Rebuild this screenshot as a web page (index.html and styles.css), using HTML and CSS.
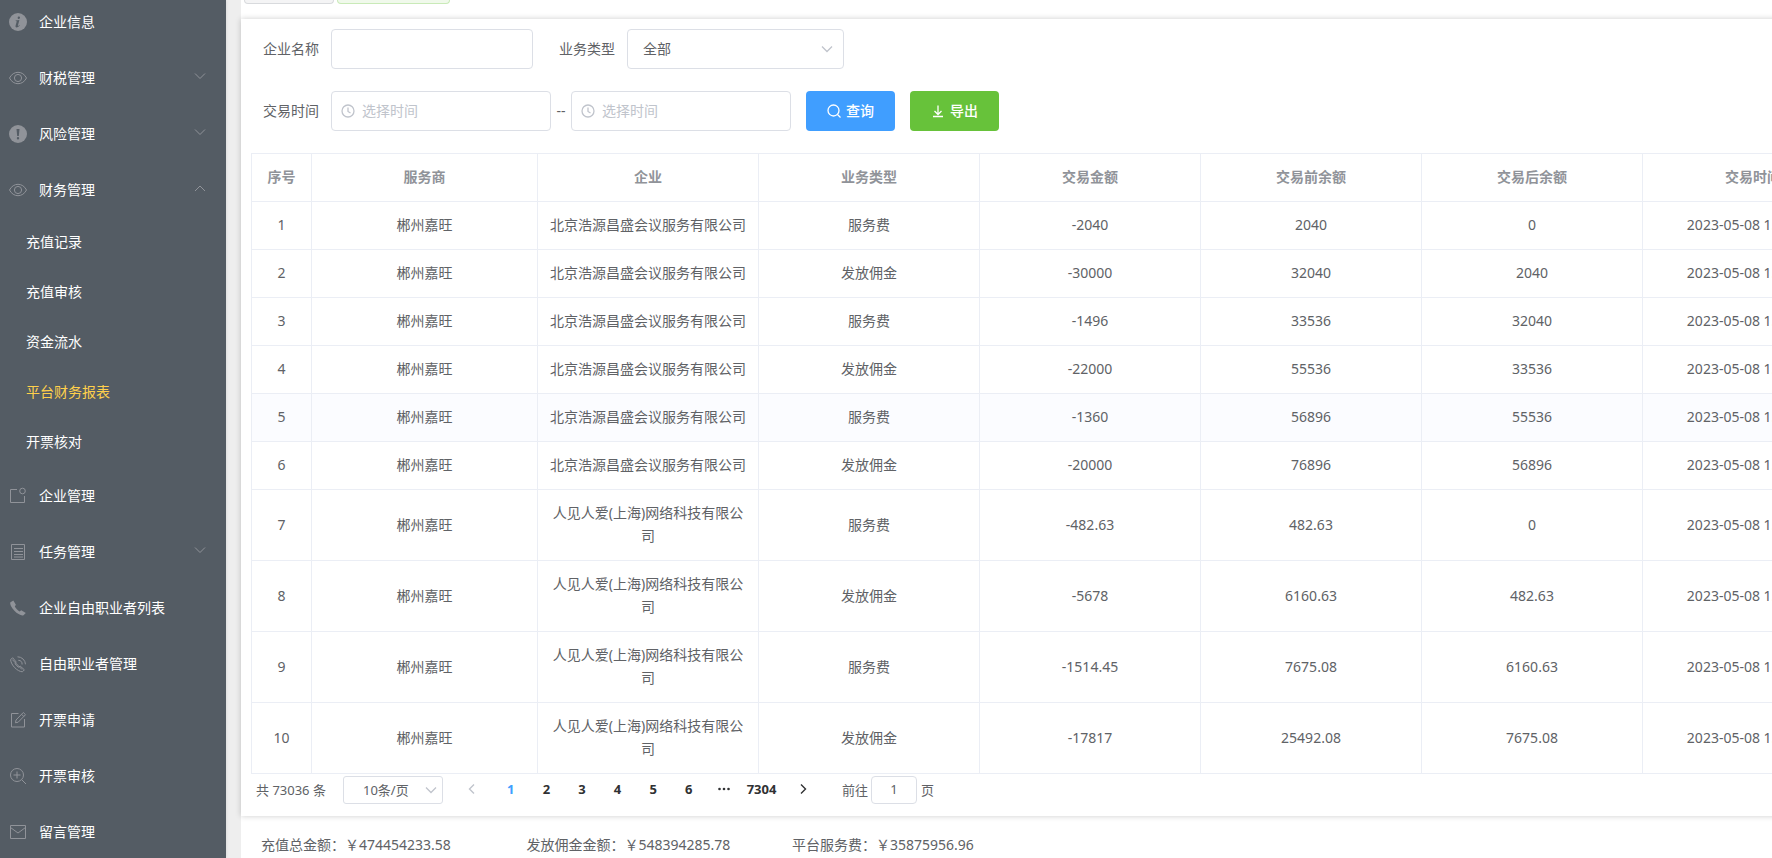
FILE: index.html
```html
<!DOCTYPE html>
<html lang="zh-CN">
<head>
<meta charset="utf-8">
<title>平台财务报表</title>
<link rel="stylesheet" href="styles.css">
</head>
<body>
<div class="layout">
  <nav class="sidebar">
    <ul class="menu">
      <li><a class="menu-item" href="#"><svg class="menu-icon" viewBox="0 0 18 18"><circle class="fill" cx="9" cy="9" r="9"/><path class="cut" d="M9.9 3.6a1.2 1.2 0 1 1-.1 2.4 1.2 1.2 0 0 1 .1-2.4zM6.6 7.6l3.8-.6-1.5 5.4c-.2.8 0 1 .9.1l.6-.6.4.4c-1.200 1.600-2.300 2.200-3.200 2.200-1.100 0-1.300-.8-1-1.900l1-3.700c.2-.7 0-.8-1-.8z"/></svg><span>企业信息</span></a></li>
      <li><a class="menu-item" href="#"><svg class="menu-icon" viewBox="0 0 18 18"><path d="M.5 9C2.500 5.200 5.500 3.300 9 3.300S15.500 5.200 17.500 9C15.500 12.800 12.500 14.700 9 14.700S2.500 12.800.5 9z"/><circle cx="9" cy="9" r="3.600"/></svg><span>财税管理</span><svg class="arrow" viewBox="0 0 12 12"><path d="M1 3.500l5 5 5-5"/></svg></a></li>
      <li><a class="menu-item" href="#"><svg class="menu-icon" viewBox="0 0 18 18"><circle class="fill" cx="9" cy="9" r="9"/><path class="cut" d="M7.500 4h3l-.7 7H8.200zM9 12a1.200 1.200 0 1 1 0 2.400A1.200 1.200 0 0 1 9 12z"/></svg><span>风险管理</span><svg class="arrow" viewBox="0 0 12 12"><path d="M1 3.500l5 5 5-5"/></svg></a></li>
      <li><a class="menu-item" href="#"><svg class="menu-icon" viewBox="0 0 18 18"><path d="M.5 9C2.500 5.200 5.500 3.300 9 3.300S15.500 5.200 17.500 9C15.500 12.800 12.500 14.700 9 14.700S2.500 12.800.5 9z"/><circle cx="9" cy="9" r="3.600"/></svg><span>财务管理</span><svg class="arrow" viewBox="0 0 12 12"><path d="M1 9l5-5 5 5"/></svg></a>
        <ul class="submenu">
          <li><a class="sub-item" href="#">充值记录</a></li>
          <li><a class="sub-item" href="#">充值审核</a></li>
          <li><a class="sub-item" href="#">资金流水</a></li>
          <li><a class="sub-item active" href="#">平台财务报表</a></li>
          <li><a class="sub-item" href="#">开票核对</a></li>
        </ul>
      </li>
      <li><a class="menu-item" href="#"><svg class="menu-icon" viewBox="0 0 18 18"><path d="M8 2.500H1.500v13h14V9"/><circle cx="13.500" cy="4" r="2.800"/></svg><span>企业管理</span></a></li>
      <li><a class="menu-item" href="#"><svg class="menu-icon" viewBox="0 0 18 18"><path d="M2.500 1.500h13v15h-13zM5 5.500h9M5 8.500h9M5 11.500h9M5 14h9"/></svg><span>任务管理</span><svg class="arrow" viewBox="0 0 12 12"><path d="M1 3.500l5 5 5-5"/></svg></a></li>
      <li><a class="menu-item" href="#"><svg class="menu-icon" viewBox="0 0 18 18"><path class="fill" d="M1.200 3.600L4.300 1.400 6.900 5.700 5.800 7.400C6.600 9.100 8.800 11.400 10.600 12.400L12.200 11.200 16.800 14 14.500 16.200C12.500 17 8.500 15.200 5.400 11.800 2.200 8.400.8 5.400 1.200 3.600z"/></svg><span>企业自由职业者列表</span></a></li>
      <li><a class="menu-item" href="#"><svg class="menu-icon" viewBox="0 0 18 18"><path d="M1.600 4.700l2-2L7.200 7 6.100 8.700c.8 1.400 2 2.600 3.400 3.500l1.700-1.100 4.200 3.700-2 2C8.500 16.600 2 10.200 1.600 4.700zM3.200 4.500l9.800 10M9.300 5.300a4 4 0 0 1 3.800 4.200M8.500 1.800a8 8 0 0 1 8 7.500"/></svg><span>自由职业者管理</span></a></li>
      <li><a class="menu-item" href="#"><svg class="menu-icon" viewBox="0 0 18 18"><path d="M9.500 2.500h-7v13.500h13V8M6.500 11.800l.5-2.800 7.300-7.500 2.200 2.200-7.300 7.500zM12.600 3.300l2.200 2.200"/></svg><span>开票申请</span></a></li>
      <li><a class="menu-item" href="#"><svg class="menu-icon" viewBox="0 0 18 18"><circle cx="8" cy="8" r="6.500"/><path d="M12.700 12.700l4.300 4.300M4.500 8h7M8 4.500v7"/></svg><span>开票审核</span></a></li>
      <li><a class="menu-item" href="#"><svg class="menu-icon" viewBox="0 0 18 18"><path d="M1.500 2.500h15v13h-15zM1.500 4.500L9 10l7.500-5.500"/></svg><span>留言管理</span></a></li>
    </ul>
  </nav>

  <main class="main">
    <div class="tags"><span class="tag"></span><span class="tag tag-active"></span></div>

    <section class="card">
      <form class="filters">
        <div class="form-row">
          <label class="label" for="company">企业名称</label>
          <input class="field field-name" id="company" type="text">
          <label class="label label-second" for="biz">业务类型</label>
          <div class="select-wrap field-type">
            <select class="field" id="biz"><option>全部</option></select>
            <svg class="caret" viewBox="0 0 12 12"><path d="M1 3.500l5 5 5-5"/></svg>
          </div>
        </div>
        <div class="form-row">
          <label class="label" for="from">交易时间</label>
          <div class="date-wrap">
            <svg class="clock" viewBox="0 0 14 14"><circle cx="7" cy="7" r="6"/><path d="M7 3.500V7.500l2.500 1.500"/></svg>
            <input class="field" id="from" type="text" placeholder="选择时间">
          </div>
          <span class="dash">--</span>
          <div class="date-wrap">
            <svg class="clock" viewBox="0 0 14 14"><circle cx="7" cy="7" r="6"/><path d="M7 3.500V7.500l2.500 1.500"/></svg>
            <input class="field" id="to" type="text" placeholder="选择时间" aria-label="结束时间">
          </div>
          <button class="btn btn-primary" type="button"><svg viewBox="0 0 14 14"><circle cx="6.500" cy="6.500" r="5.500"/><path d="M10.500 10.500L13.500 13.500"/></svg><span>查询</span></button>
          <button class="btn btn-success" type="button"><svg viewBox="0 0 14 14"><path d="M7 1.500v9M3.500 7L7 10.500 10.500 7M2 12.500h10"/></svg><span>导出</span></button>
        </div>
      </form>

      <table class="table">
        <colgroup><col class="c-index"><col class="c-provider"><col class="c-std" span="6"></colgroup>
        <thead>
          <tr><th>序号</th><th>服务商</th><th>企业</th><th>业务类型</th><th>交易金额</th><th>交易前余额</th><th>交易后余额</th><th>交易时间</th></tr>
        </thead>
        <tbody>
          <tr><td>1</td><td>郴州嘉旺</td><td>北京浩源昌盛会议服务有限公司</td><td>服务费</td><td>-2040</td><td>2040</td><td>0</td><td>2023-05-08 15:20:11</td></tr>
          <tr><td>2</td><td>郴州嘉旺</td><td>北京浩源昌盛会议服务有限公司</td><td>发放佣金</td><td>-30000</td><td>32040</td><td>2040</td><td>2023-05-08 15:20:11</td></tr>
          <tr><td>3</td><td>郴州嘉旺</td><td>北京浩源昌盛会议服务有限公司</td><td>服务费</td><td>-1496</td><td>33536</td><td>32040</td><td>2023-05-08 15:20:11</td></tr>
          <tr><td>4</td><td>郴州嘉旺</td><td>北京浩源昌盛会议服务有限公司</td><td>发放佣金</td><td>-22000</td><td>55536</td><td>33536</td><td>2023-05-08 15:20:11</td></tr>
          <tr class="current"><td>5</td><td>郴州嘉旺</td><td>北京浩源昌盛会议服务有限公司</td><td>服务费</td><td>-1360</td><td>56896</td><td>55536</td><td>2023-05-08 15:20:11</td></tr>
          <tr><td>6</td><td>郴州嘉旺</td><td>北京浩源昌盛会议服务有限公司</td><td>发放佣金</td><td>-20000</td><td>76896</td><td>56896</td><td>2023-05-08 15:20:11</td></tr>
          <tr><td>7</td><td>郴州嘉旺</td><td>人见人爱(上海)网络科技有限公司</td><td>服务费</td><td>-482.63</td><td>482.63</td><td>0</td><td>2023-05-08 15:20:11</td></tr>
          <tr><td>8</td><td>郴州嘉旺</td><td>人见人爱(上海)网络科技有限公司</td><td>发放佣金</td><td>-5678</td><td>6160.63</td><td>482.63</td><td>2023-05-08 15:20:11</td></tr>
          <tr><td>9</td><td>郴州嘉旺</td><td>人见人爱(上海)网络科技有限公司</td><td>服务费</td><td>-1514.45</td><td>7675.08</td><td>6160.63</td><td>2023-05-08 15:20:11</td></tr>
          <tr><td>10</td><td>郴州嘉旺</td><td>人见人爱(上海)网络科技有限公司</td><td>发放佣金</td><td>-17817</td><td>25492.08</td><td>7675.08</td><td>2023-05-08 15:20:11</td></tr>
        </tbody>
      </table>

      <div class="pagination">
        <span class="total">共 73036 条</span>
        <div class="select-wrap page-size">
          <select class="field" aria-label="每页条数"><option>10条/页</option></select>
          <svg class="caret" viewBox="0 0 12 12"><path d="M1 3.500l5 5 5-5"/></svg>
        </div>
        <button class="page-btn prev" type="button" aria-label="上一页" disabled><svg viewBox="0 0 12 12"><path d="M8 1.500L3.500 6 8 10.500"/></svg></button>
        <div class="pager">
          <button class="page page-current" type="button">1</button>
          <button class="page" type="button">2</button>
          <button class="page" type="button">3</button>
          <button class="page" type="button">4</button>
          <button class="page" type="button">5</button>
          <button class="page" type="button">6</button>
          <button class="page" type="button" aria-label="更多"><svg class="dots" viewBox="0 0 12 4"><circle cx="1.500" cy="2" r="1.300"/><circle cx="6" cy="2" r="1.300"/><circle cx="10.500" cy="2" r="1.300"/></svg></button>
          <button class="page page-last" type="button">7304</button>
        </div>
        <button class="page-btn next" type="button" aria-label="下一页"><svg viewBox="0 0 12 12"><path d="M4 1.500L8.500 6 4 10.500"/></svg></button>
        <label class="jump"><span>前往</span><input class="field" type="text" value="1"><span>页</span></label>
      </div>
    </section>

    <div class="summary">
      <span>充值总金额：￥474454233.58</span>
      <span>发放佣金金额：￥548394285.78</span>
      <span>平台服务费：￥35875956.96</span>
    </div>
  </main>
</div>
</body>
</html>
```
FILE: styles.css
```css
* { box-sizing: border-box; }
html, body { height: 100%; }
body {
  margin: 0;
  overflow: hidden;
  font-family: "Noto Sans", "Noto Sans CJK SC", sans-serif;
  font-size: 14px;
  color: #606266;
  background: #fff;
}
ul { margin: 0; padding: 0; list-style: none; }
a { text-decoration: none; color: inherit; }
button, input, select { font: inherit; color: inherit; }
svg { fill: none; stroke: currentColor; flex: none; }

.layout { display: flex; min-height: 100vh; background: #eee; }

.sidebar {
  flex: 0 0 226px;
  height: 100vh;
  overflow: hidden;
  background: #545c64;
  color: #fff;
  box-shadow: 0 0 3px rgba(0, 0, 0, .12);
}
.menu { margin-top: -6px; }
.menu-item {
  display: flex;
  align-items: center;
  height: 56px;
  padding: 0 20px 0 9px;
}
.menu-item span { padding-bottom: 2px; }
.menu-icon { width: 18px; height: 18px; margin-right: 12px; color: #909399; }
.menu-icon .fill { fill: currentColor; stroke: none; }
.menu-icon .cut { fill: #545c64; stroke: none; }
.arrow { width: 12px; height: 12px; margin: 0 0 5px auto; color: #909399; }
.sub-item { display: block; height: 50px; line-height: 47px; padding-left: 26px; }
.sub-item.active { color: #ffd04b; }

.main {
  flex: none;
  width: max-content;
  min-width: calc(100% - 241px);
  margin-left: 15px;
  background: #fff;
}
.tags { display: flex; gap: 3px; height: 19px; padding-left: 3px; }
.tag {
  width: 90px;
  height: 4px;
  border: 1px solid #d8dadd;
  border-top: 0;
  border-radius: 0 0 4px 4px;
  background: #f4f4f5;
}
.tag-active { width: 113px; border-color: #c9eab8; background: #f0f9eb; }

.card { padding: 10px 10px 12px; background: #fff; box-shadow: 0 0 6px rgba(0, 0, 0, .2); }
.form-row { display: flex; align-items: center; margin-bottom: 22px; }
.label { width: 80px; padding: 0 12px 2px 0; text-align: right; }
.label-second { width: 94px; }
.field {
  width: 100%;
  height: 40px;
  padding: 0 15px 2px;
  border: 1px solid #dcdfe6;
  border-radius: 4px;
  background: #fff;
  outline: 0;
  appearance: none;
}
.field::placeholder { color: #c0c4cc; opacity: 1; }
.field-name { width: 202px; }
.field-type { width: 217px; }
.select-wrap, .date-wrap { position: relative; }
.caret {
  position: absolute;
  top: 14px;
  right: 11px;
  width: 12px;
  height: 12px;
  color: #c0c4cc;
  stroke-width: 1.3;
  pointer-events: none;
}
.date-wrap { width: 220px; }
.date-wrap .field { padding-left: 30px; }
.clock {
  position: absolute;
  top: 13px;
  left: 10px;
  width: 14px;
  height: 14px;
  color: #c0c4cc;
  stroke-width: 1.3;
}
.dash { width: 20px; padding-bottom: 2px; text-align: center; }
.btn {
  display: flex;
  align-items: center;
  justify-content: center;
  gap: 5px;
  width: 89px;
  height: 40px;
  margin-left: 15px;
  padding: 0;
  border: 0;
  border-radius: 4px;
  color: #fff;
  font-weight: 500;
}
.btn span { padding-bottom: 2px; }
.btn svg { width: 14px; height: 14px; stroke-width: 1.3; }
.btn-primary { background: #409eff; }
.btn-success { background: #67c23a; }

.table {
  width: 1613px;
  table-layout: fixed;
  border-collapse: separate;
  border-spacing: 0;
  border: solid #ebeef5;
  border-width: 1px 0 0 1px;
  text-align: center;
}
.c-index { width: 60px; }
.c-provider { width: 226px; }
.c-std { width: 221px; }
.table th, .table td {
  padding: 11px 10px 13px;
  border: solid #ebeef5;
  border-width: 0 1px 1px 0;
  line-height: 23px;
}
.table th { color: #909399; font-weight: 700; }
.current td { background: #fbfcff; }

.pagination { display: flex; align-items: center; padding: 2px 5px 0; font-size: 13px; }
.total { width: 87px; padding-bottom: 2px; }
.page-size { width: 100px; }
.page-size .field { height: 28px; padding: 0 19px; border-radius: 3px; }
.page-size .caret { top: 8px; right: 6px; }
.page-btn, .page {
  display: flex;
  align-items: center;
  justify-content: center;
  height: 28px;
  padding: 0 0 2px;
  border: 0;
  background: none;
  color: #303133;
}
.page-btn { width: 38px; }
.page-btn svg { width: 12px; height: 12px; stroke-width: 1.4; }
.prev { margin-left: 10px; color: #c0c4cc; }
.pager { display: flex; width: 288px; margin-left: 2px; }
.page { flex: 1; font-weight: 700; }
.page-current { color: #409eff; }
.page-last { flex: 0 0 39px; }
.dots { width: 12px; height: 4px; fill: currentColor; stroke: none; }
.next { margin-left: 3px; }
.jump { display: flex; align-items: center; margin-left: 20px; }
.jump span { padding-bottom: 2px; }
.jump .field { width: 46px; height: 28px; margin: 0 4px 0 3px; padding: 0 3px 2px; text-align: center; }

.summary {
  display: grid;
  grid-template-columns: repeat(6, 1fr);
  padding: 19px 20px 0;
  line-height: 20px;
  white-space: nowrap;
}
```
